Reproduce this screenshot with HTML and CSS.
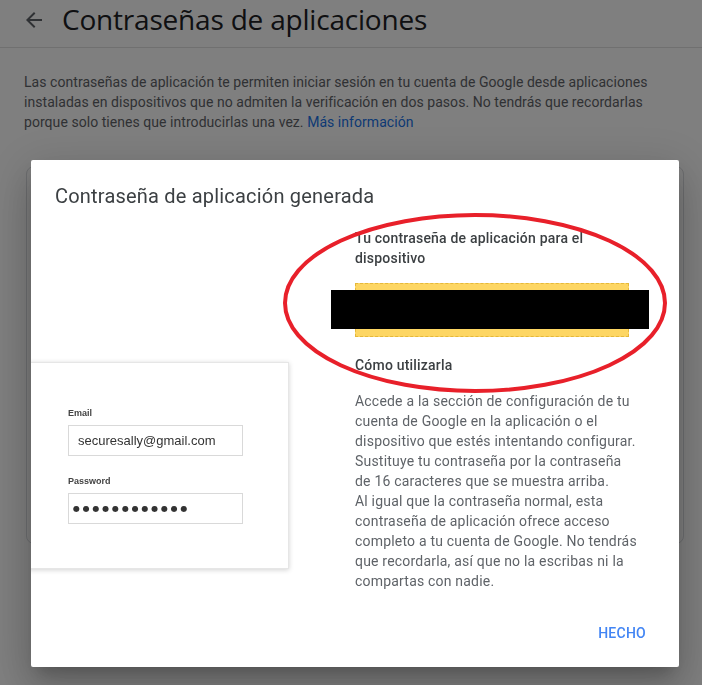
FILE: index.html
```html
<!DOCTYPE html>
<html lang="es">
<head>
    <meta charset="UTF-8">
    <meta name="viewport" content="width=device-width, initial-scale=1.0">
    <title>Contraseñas de aplicaciones</title>
    <link rel="stylesheet" href="styles.css">
</head>
<body>

    <div class="page">
        <header class="top">
            <svg class="back" viewBox="0 0 24 24" width="24" height="24">
                <path d="M20 11H7.83l5.59-5.59L12 4l-8 8 8 8 1.41-1.41L7.83 13H20v-2z"/>
            </svg>
            <h1>Contraseñas de aplicaciones</h1>
        </header>
        <p class="intro">Las contraseñas de aplicación te permiten iniciar sesión en tu cuenta de Google desde aplicaciones instaladas en dispositivos que no admiten la verificación en dos pasos. No tendrás que recordarlas porque solo tienes que introducirlas una vez. <a href="#">Más información</a></p>
        <div class="panel"></div>
    </div>

    <div class="scrim"></div>

    <div class="dialog">
        <h2>Contraseña de aplicación generada</h2>
        <div class="content">
            <div class="illus">
                <div class="login">
                    <label>Email</label>
                    <div class="field">securesally@gmail.com</div>
                    <label>Password</label>
                    <div class="field dots">●●●●●●●●●●●●</div>
                </div>
            </div>
            <div class="info">
                <h3>Tu contraseña de aplicación para el dispositivo</h3>
                <div class="pass">
                    <div class="redact"></div>
                </div>
                <h3 class="how">Cómo utilizarla</h3>
                <p>Accede a la sección de configuración de tu cuenta de Google en la aplicación o el dispositivo que estés intentando configurar. Sustituye tu contraseña por la contraseña de 16 caracteres que se muestra arriba.<br>Al igual que la contraseña normal, esta contraseña de aplicación ofrece acceso completo a tu cuenta de Google. No tendrás que recordarla, así que no la escribas ni la compartas con nadie.</p>
            </div>
        </div>
        <div class="actions">
            <button>HECHO</button>
        </div>
        <svg class="circle" width="400" height="190" viewBox="0 0 400 190">
            <ellipse cx="192" cy="93" rx="190" ry="88" fill="none" stroke="#e8202a" stroke-width="4"/>
        </svg>
    </div>

</body>
</html>
```

FILE: styles.css
```css
body {
    margin: 0;
    font-family: Roboto, Arial, sans-serif;
    background: #fff;
    color: #202124;
}
.top {
    height: 48px;
    border-bottom: 1px solid #e0e0e0;
    display: flex;
    align-items: center;
    padding-left: 22px;
    box-sizing: border-box;
}
.back {
    fill: #5f6368;
    margin-top: -8px;
}
.top h1 {
    margin: -9px 0 0 16px;
    font-family: "Open Sans", Roboto, sans-serif;
    font-weight: 400;
    font-size: 28px;
    letter-spacing: -0.2px;
    color: #202124;
}
.intro {
    margin: 24px 36px 0 24px;
    font-size: 14px;
    line-height: 20px;
    letter-spacing: 0.05px;
    color: #5f6368;
}
.intro a {
    color: #1a73e8;
    text-decoration: none;
}
.panel {
    margin: 34px 0 0 26px;
    width: 658px;
    height: 378px;
    border: 1px solid #dadce0;
    border-radius: 8px;
    box-sizing: border-box;
}
.scrim {
    position: fixed;
    inset: 0;
    background: rgba(0, 0, 0, 0.5);
}
.dialog {
    position: fixed;
    left: 31px;
    top: 160px;
    width: 648px;
    height: 507px;
    background: #fff;
    border-radius: 2px;
    overflow: hidden;
    display: flex;
    flex-direction: column;
    box-shadow: 0 11px 15px -7px rgba(0,0,0,.2), 0 24px 38px 3px rgba(0,0,0,.14), 0 9px 46px 8px rgba(0,0,0,.12);
}
.dialog h2 {
    margin: 22px 0 0 24px;
    font-size: 20px;
    line-height: 28px;
    font-weight: 400;
    color: #3c4043;
    letter-spacing: 0.2px;
}
.content {
    display: flex;
    margin-top: 18px;
}
.illus {
    width: 324px;
    flex: none;
}
.login {
    margin: 134px 0 0 -20px;
    width: 278px;
    height: 207px;
    box-sizing: border-box;
    padding: 45px 0 0 56px;
    background: #fff;
    border: 1px solid #e6e6e6;
    box-shadow: 0 1px 5px rgba(0, 0, 0, 0.18);
    font-family: "Liberation Sans", Arial, sans-serif;
    color: #333;
}
.login label {
    display: block;
    font-size: 9px;
    font-weight: 700;
    color: #444;
    margin-bottom: 7px;
}
.field {
    width: 175px;
    height: 31px;
    box-sizing: border-box;
    border: 1px solid #d9d9d9;
    padding-left: 9px;
    font-size: 13px;
    line-height: 29px;
    margin-bottom: 20px;
}
.field.dots {
    font-family: "DejaVu Sans", sans-serif;
    font-size: 8px;
    letter-spacing: 2.8px;
    padding-left: 4px;
    color: #333;
}
.info {
    width: 282px;
    color: #3c4043;
    font-size: 14px;
    line-height: 20px;
    letter-spacing: 0.2px;
}
.info h3 {
    margin: 0;
    font-size: 14px;
    font-weight: 500;
}
.pass {
    position: relative;
    margin-top: 15px;
    width: 274px;
    height: 54px;
    box-sizing: border-box;
    background: #fdd663;
    border: 1px dashed #e5b83a;
}
.redact {
    position: absolute;
    left: -25px;
    top: 6px;
    width: 318px;
    height: 39px;
    background: #000;
}
.info h3.how {
    margin-top: 18px;
}
.info p {
    margin: 16px 0 0;
    color: #5f6368;
}
.actions {
    margin-top: auto;
    display: flex;
    justify-content: flex-end;
    padding: 0 33px 24px 0;
}
.actions button {
    border: 0;
    background: none;
    font-family: Roboto, Arial, sans-serif;
    font-size: 14px;
    font-weight: 500;
    letter-spacing: 0.25px;
    color: #4285f4;
    padding: 0;
    line-height: 20px;
}
.circle {
    position: absolute;
    left: 252px;
    top: 50px;
}
```
